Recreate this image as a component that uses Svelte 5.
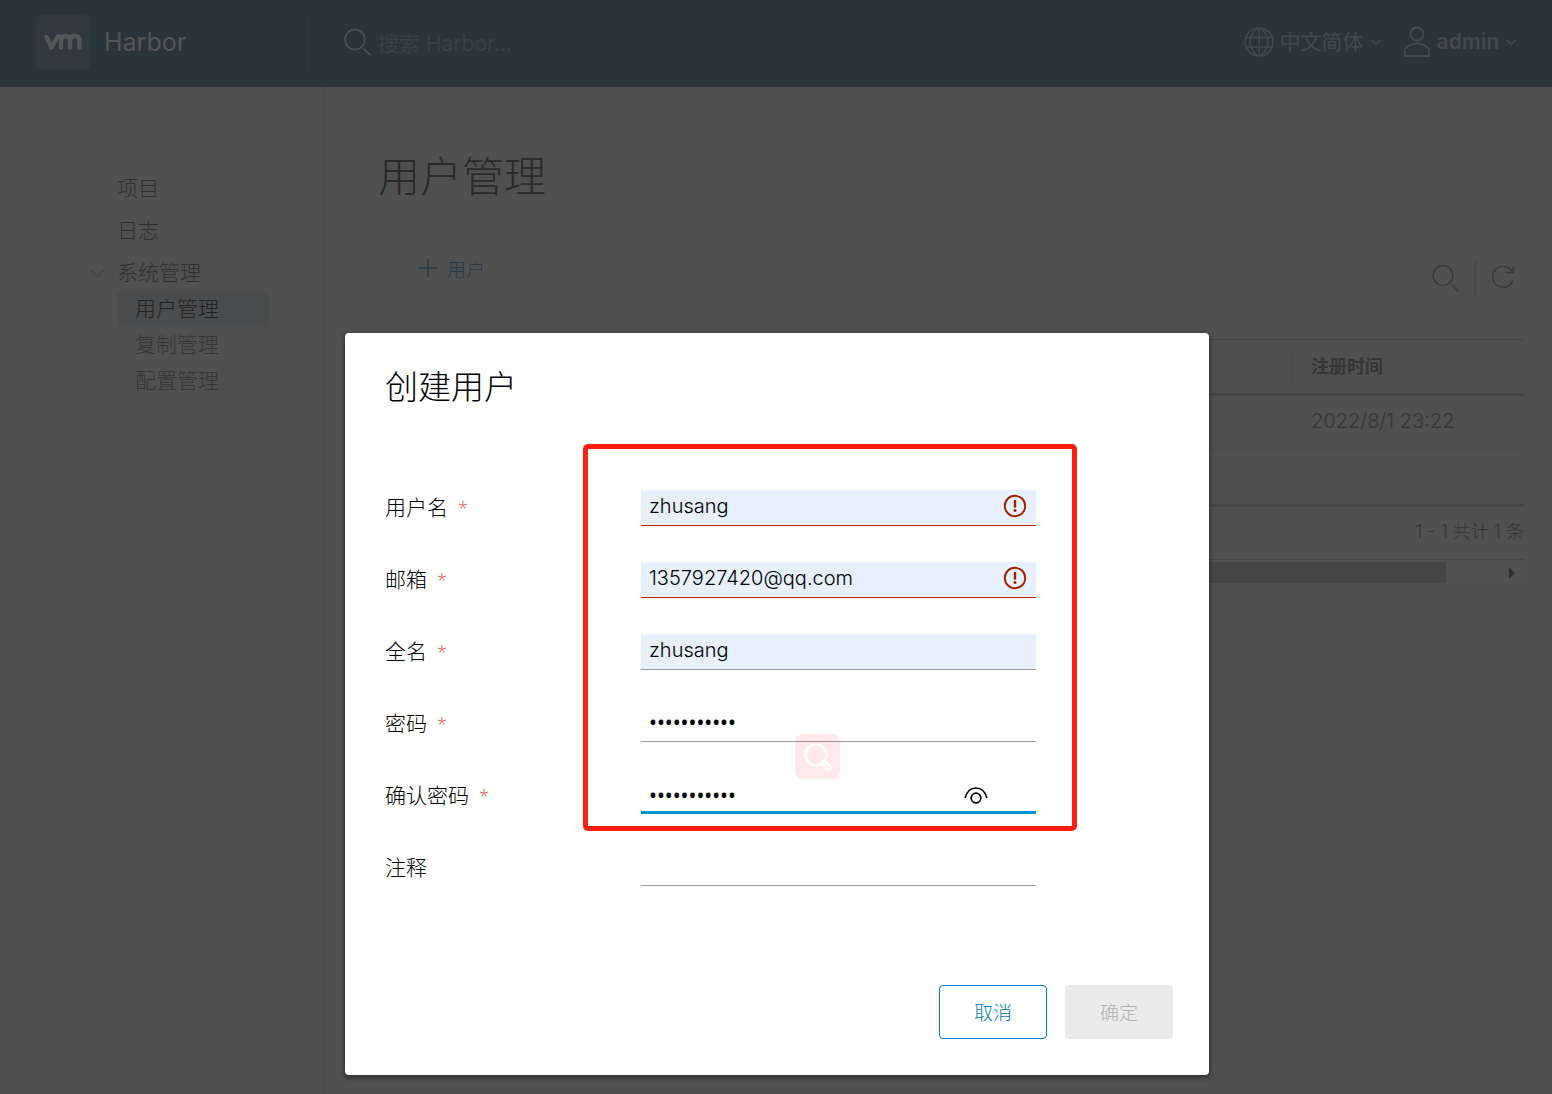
<script>
  const subItems = [
    { label: '用户管理', active: true },
    { label: '复制管理', active: false },
    { label: '配置管理', active: false },
  ];

  let fields = $state([
    { id: 'username', label: '用户名', type: 'text', value: 'zhusang', required: true, filled: true, error: true },
    { id: 'email', label: '邮箱', type: 'text', value: '1357927420@qq.com', required: true, filled: true, error: true },
    { id: 'realname', label: '全名', type: 'text', value: 'zhusang', required: true, filled: true },
    { id: 'password', label: '密码', type: 'password', value: 'Harbor12345', required: true },
    { id: 'confirm', label: '确认密码', type: 'password', value: 'Harbor12345', required: true, active: true },
    { id: 'comment', label: '注释', type: 'text', value: '' },
  ]);
</script>

{#snippet chevron(size)}
  <svg class="chevron" width={size} height={size} viewBox="0 0 12 12" fill="none" stroke="currentColor" stroke-width="1.4" aria-hidden="true">
    <path d="M1 3.5 6 8.5 11 3.5" />
  </svg>
{/snippet}

{#snippet magnifier()}
  <svg width="28" height="28" viewBox="0 0 28 28" fill="none" stroke="currentColor" stroke-width="1.5" aria-hidden="true">
    <circle cx="11" cy="11.5" r="10" />
    <path d="M19.5 20.5 26.5 27.3" />
  </svg>
{/snippet}

<div class="page">
  <header>
    <a class="brand" href="#home">
      <span class="logo">
        <svg width="38" height="18" viewBox="0 0 38 18" fill="none" stroke="currentColor" stroke-width="4.4" stroke-linecap="round" stroke-linejoin="round" aria-hidden="true">
          <path d="M2.5 4 7.5 14.5 13 4.5Q15 2 17 4.5V14.5M17 7Q18 3 21.500 3Q26 3 26 7.500V14.500M26 7Q27 3 30.500 3Q35.500 3 35.500 8V14.500" />
        </svg>
      </span>
      <span class="name">Harbor</span>
    </a>
    <label class="search">
      {@render magnifier()}
      <input type="text" placeholder="搜索 Harbor..." aria-label="搜索" />
    </label>
    <button class="menu lang">
      <svg width="30" height="30" viewBox="0 0 30 30" fill="none" stroke="currentColor" stroke-width="1.5" aria-hidden="true">
        <circle cx="15" cy="15" r="14" />
        <path d="M1.500 10.500H28.500M1.500 20H28.500M15 1V29M13 1.500Q6 8 6 15T13 28.500M17 1.500Q24 8 24 15T17 28.500" />
      </svg>
      <span>中文简体</span>
      {@render chevron(12)}
    </button>
    <button class="menu user">
      <svg width="28" height="32" viewBox="0 0 28 32" fill="none" stroke="currentColor" stroke-width="1.8" aria-hidden="true">
        <circle cx="14" cy="8" r="6.500" />
        <path d="M2 30V23Q7 17.500 14 17.500T26 23V30Z" stroke-linejoin="round" />
      </svg>
      <span>admin</span>
      {@render chevron(12)}
    </button>
  </header>

  <div class="body">
    <nav>
      <a href="#projects">项目</a>
      <a href="#logs">日志</a>
      <a class="group" href="#system">{@render chevron(15)}系统管理</a>
      <div class="sub">
        {#each subItems as item}
          <a href="#sub" class:active={item.active}>{item.label}</a>
        {/each}
      </div>
    </nav>

    <main>
      <h1>用户管理</h1>
      <div class="toolbar">
        <button class="add">
          <svg width="18" height="18" viewBox="0 0 18 18" stroke="currentColor" stroke-width="1.5" aria-hidden="true">
            <path d="M9 0V18M0 9H18" />
          </svg>
          用户
        </button>
        <div class="tools">
          <button aria-label="搜索">{@render magnifier()}</button>
          <span class="rule"></span>
          <button aria-label="刷新">
            <svg width="24" height="24" viewBox="0 0 24 24" fill="none" stroke="currentColor" stroke-width="1.5" aria-hidden="true">
              <path d="M21.500 6A10.500 10.500 0 1 0 22 14.500M22.300 0V6.500H14.500" />
            </svg>
          </button>
        </div>
      </div>
      <table>
        <thead><tr><th></th><th><span>注册时间</span></th></tr></thead>
        <tbody>
          <tr><td></td><td>2022/8/1 23:22</td></tr>
          <tr class="last"><td></td><td></td></tr>
        </tbody>
      </table>
      <div class="count">1 - 1 共计 1 条</div>
      <div class="scrollbar">
        <span class="thumb"></span>
        <span class="arrow"></span>
      </div>
    </main>
  </div>
</div>

<div class="overlay">
  <div class="modal" role="dialog" aria-modal="true" aria-labelledby="dialog-title">
    <h2 id="dialog-title">创建用户</h2>
    <form>
      {#each fields as f}
        <div class="row">
          <label for={f.id}>{f.label}{#if f.required}<span class="star">*</span>{/if}</label>
          <div class="field" class:filled={f.filled} class:error={f.error} class:active={f.active}>
            <input id={f.id} type={f.type} bind:value={f.value} autocomplete="off" />
            {#if f.error}
              <svg width="24" height="24" viewBox="0 0 24 24" fill="none" stroke="#a32100" stroke-width="1.9" aria-hidden="true">
                <circle cx="12" cy="12" r="10.200" />
                <path d="M12 7V12.500" stroke-width="2.400" stroke-linecap="round" />
                <circle cx="12" cy="16.500" r="1.500" fill="#a32100" stroke="none" />
              </svg>
            {/if}
            {#if f.active}
              <button type="button" class="eye" aria-label="显示密码">
                <svg width="24" height="18" viewBox="0 0 24 18" fill="none" stroke="#000" stroke-width="1.700" aria-hidden="true">
                  <path d="M1 12C3 5 7 2 12 2S21 5 23 12" />
                  <circle cx="12" cy="12" r="4.800" />
                </svg>
              </button>
            {/if}
          </div>
        </div>
      {/each}
    </form>
    <footer>
      <button class="cancel">取消</button>
      <button class="ok" disabled>确定</button>
    </footer>
    <div class="frame"></div>
    <div class="badge">
      <svg width="28" height="28" viewBox="0 0 28 28" fill="none" stroke="#fff" stroke-width="2.500" aria-hidden="true">
        <circle cx="12" cy="12" r="10.500" />
        <path d="M18 20 20 18 26 23Q27 25 25 26Q23.500 27 22 25Z" stroke-linejoin="round" />
      </svg>
    </div>
  </div>
</div>

<style>
  :global(body) {
    background: #505050;
    font-family: Inter, 'Noto Sans CJK SC', sans-serif;
    font-weight: 300;
    font-size: 21px;
  }
  * { box-sizing: border-box; }
  button, input { font: inherit; color: inherit; background: none; border: 0; padding: 0; }
  a { color: inherit; text-decoration: none; }
  svg { display: block; flex: none; }

  .page { min-height: 100vh; display: flex; flex-direction: column; }
  header {
    height: 87px; background: #2a353b; color: #535557;
    display: flex; align-items: center; padding: 0 35px 4px 36px;
  }
  .brand { width: 271px; display: flex; align-items: center; gap: 14px; }
  .logo {
    width: 54px; height: 54px; border-radius: 4px; background: #31383f;
    display: flex; align-items: center; justify-content: center;
  }
  .name { font-size: 25px; font-weight: 400; }
  .search {
    flex: 1; height: 60px; border-left: 1px solid #30393f; padding-left: 36px;
    display: flex; align-items: center; gap: 6px; color: #4d5255;
  }
  .search input { flex: 1; min-width: 0; height: 36px; padding-top: 3px; outline: 0; font-weight: 400; }
  .search input::placeholder { color: #384146; opacity: 1; }
  .menu { display: flex; align-items: center; gap: 6px; color: #44494c; font-weight: 400; line-height: 28px; }
  .user { margin-left: 21px; font-weight: 600; }

  .body { flex: 1; display: flex; }
  nav {
    width: 324px; flex: none; border-right: 1px solid #484848; padding: 81px 54px 0 117px;
    display: flex; flex-direction: column; color: #303030; line-height: 42px;
  }
  .group { display: flex; align-items: center; gap: 12px; margin-left: -27px; height: 42px; }
  .group .chevron { color: #444; }
  .sub { display: flex; flex-direction: column; line-height: 36px; color: #363636; margin-top: -3px; }
  .sub a { padding-left: 18px; border-radius: 4px; height: 36px; }
  .sub .active { background: #4a4c4e; color: #222; }

  main { flex: 1; min-width: 0; padding: 63px 28px 0 54px; color: #363636; }
  h1 { margin: 0; font-size: 42px; line-height: 54px; font-weight: 300; color: #2a2a2a; }
  .toolbar { display: flex; justify-content: space-between; padding: 46px 9px 43px 41px; }
  .add { height: 36px; display: flex; align-items: center; gap: 10px; font-size: 19px; color: #263c48; }
  .tools { display: flex; align-items: center; gap: 14px; padding-top: 10px; color: #3a3a3a; }
  .rule { width: 3px; height: 36px; background: #484848; }
  table { width: 100%; border-collapse: separate; border-spacing: 0; table-layout: fixed; }
  th, td { padding: 0; text-align: left; }
  th:last-child, td:last-child { width: 232px; }
  th { height: 57px; border-top: 1px solid #464646; border-bottom: 3px solid #464646; font-size: 18px; font-weight: 700; }
  th span { display: block; line-height: 36px; border-left: 1px solid #494949; padding-left: 18px; }
  td { height: 54px; border-bottom: 1px solid #494949; padding-bottom: 3px; font-size: 20px; }
  td:last-child { padding-left: 19px; }
  .last td { height: 57px; border-bottom: 3px solid #464646; }
  .count { height: 53px; line-height: 50px; border-bottom: 1px solid #464646; text-align: right; font-size: 18px; }
  .scrollbar {
    height: 21px; margin-top: 2px; background: #515151; padding-right: 9px;
    display: flex; justify-content: space-between; align-items: center;
  }
  .thumb { width: calc(100% - 69px); height: 21px; background: #464646; }
  .arrow { border-left: 6px solid #303030; border-top: 6px solid transparent; border-bottom: 6px solid transparent; }

  .overlay { position: absolute; inset: 0; display: flex; justify-content: center; align-items: flex-start; padding: 333px 0 0 2px; }
  .modal {
    position: relative; width: 864px; padding: 33px 36px 36px 40px; border-radius: 4px;
    background: #fff; color: #000; box-shadow: 0 2px 5px 1px rgb(0 0 0 / 40%);
  }
  h2 { margin: 0; font-size: 33px; line-height: 42px; font-weight: 300; }
  form { display: flex; flex-direction: column; gap: 36px; margin-top: 82px; }
  .row { display: flex; height: 36px; }
  .row label { width: 256px; line-height: 36px; }
  .star { color: #e04a38; margin-left: 10px; font-family: 'Open Sans', sans-serif; font-size: 18px; }
  .field { width: 395px; display: flex; align-items: center; border-bottom: 1px solid #999; padding: 0 9px 3px 8px; }
  .field input { flex: 1; min-width: 0; height: 32px; outline: 0; font-size: 20px; }
  .field input[type='password'] { font-family: 'Noto Sans', sans-serif; font-size: 21px; font-weight: 400; }
  .filled { background: #e8f0fe; }
  .error { border-color: #c92100; }
  .field.active { border-bottom: 3px solid #0094d2; padding-bottom: 0; }
  .eye { margin-right: 39px; }
  footer { display: flex; justify-content: flex-end; gap: 18px; margin-top: 99px; }
  footer button { width: 108px; height: 54px; padding-bottom: 2px; border-radius: 4px; font-size: 19px; }
  .cancel { border: 1px solid #0079b8; color: #0079b8; }
  .ok { background: #ebebeb; color: #b0b0b0; }
  .frame {
    position: absolute; left: 238px; top: 111px; width: 494px; height: 387px;
    border: 5px solid #ff1d12; border-radius: 5px; pointer-events: none;
  }
  .badge {
    position: absolute; left: 450px; top: 401px; width: 45px; height: 45px; border-radius: 8px;
    background: rgb(250 50 50 / 10%); display: flex; align-items: center; justify-content: center; pointer-events: none;
  }
</style>
